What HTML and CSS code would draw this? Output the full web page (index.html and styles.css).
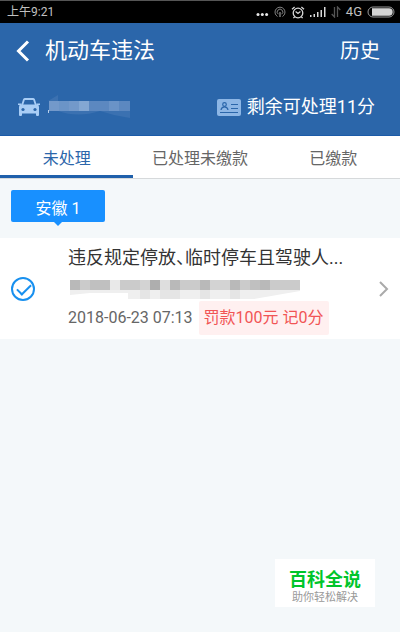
FILE: index.html
```html
<!DOCTYPE html>
<html lang="zh-CN">
<head>
<meta charset="utf-8">
<meta name="viewport" content="width=device-width, initial-scale=1">
<title>机动车违法</title>
<link rel="stylesheet" href="styles.css">
</head>
<body>
<div class="status">
  <span>上午9:21</span>
  <div class="status-icons">
    <svg width="14" height="12" viewBox="0 0 14 12" fill="#e8e8e8"><circle cx="3" cy="8.5" r="1.5"/><circle cx="7.3" cy="8.5" r="1.5"/><circle cx="11.6" cy="8.5" r="1.5"/></svg>
    <svg width="12" height="12" viewBox="0 0 12 12" fill="none" stroke="#808080"><path d="M3.5 10.5A5 5 0 1 1 8.5 10.5"/><path d="M4.3 8.2A2.8 2.8 0 1 1 7.7 8.2"/><path d="M6 6v5" stroke-width="1.4"/></svg>
    <svg width="14" height="13" viewBox="0 0 14 13" fill="none" stroke="#d8d8d8" stroke-width="1.3"><circle cx="7" cy="7" r="4.8"/><path d="M1 3.2L3.6 1M13 3.2L10.4 1M4.6 5.6L7 7.4L9.4 5.6M3.6 10.8l-1.2 1.4M10.4 10.8l1.2 1.4"/></svg>
    <svg width="16" height="12" viewBox="0 0 16 12" fill="#d8d8d8"><path d="M0 9h1.500v2H0zM3.500 8H5v3H3.500zM7 6h1.500v5H7zM10.500 4H12v7h-1.500zM14 1h1.500v10H14z"/></svg>
    <svg width="10" height="12" viewBox="0 0 10 12" fill="none" stroke="#555" stroke-width="1.3"><path d="M3.5 1v10L.7 8M6.5 11V1l2.8 3"/></svg>
    <span class="network">4G</span>
    <svg width="28" height="12" viewBox="0 0 28 12"><rect x="1" y="1" width="26" height="10" rx="5" fill="none" stroke="#999"/><path d="M5 2.300h17a3.700 3.700 0 0 1 0 7.400H5z" fill="#d4d4d4"/></svg>
  </div>
</div>
<header class="header">
  <div class="titlebar">
    <button class="back" aria-label="返回"><svg width="14" height="22" viewBox="0 0 14 22" fill="none" stroke="#fff" stroke-width="3"><path d="M12 1.5L2.5 11L12 20.5"/></svg></button>
    <h1>机动车违法</h1>
    <a class="history" href="#">历史</a>
  </div>
  <div class="summary">
    <svg class="car" width="22" height="18" viewBox="0 0 22 18"><path d="M4.200 7L6 1.500Q6.300 1 7 1h8q.7 0 1 .5L17.800 7" fill="none" stroke="#a9cdf5" stroke-width="1.800"/><path d="M0 5.500h3.500v1h15v-1H22V7h-1.500l.5 2v8q0 1-1 1h-1q-1 0-1-1v-1.500H4V17q0 1-1 1H2q-1 0-1-1V9l.5-2H0z" fill="#a9cdf5"/><g fill="#2b66aa"><circle cx="5" cy="11.500" r="1.600"/><circle cx="17" cy="11.500" r="1.600"/></g></svg>
    <svg class="plate" width="92" height="26" viewBox="0 0 92 26"><path d="M0 7L10 1V17Q30 24 52 17L66 21L82 24V7z" fill="#3b71b1"/><path d="M1 7h30v10H1z" fill="#7399ca"/><path d="M11 7h10v10H11z" fill="#6b94c7"/><path d="M31 7h10v10H31z" fill="#83a7d3"/><path d="M41 7h41v10H41z" fill="#5c88c0"/><path d="M61 7h10v10H61z" fill="#6a93c7"/><path d="M0 16h1v3H0z" fill="#b9d0ea"/></svg>
    <svg class="license" width="24" height="17" viewBox="0 0 24 17"><rect width="24" height="17" rx="2" fill="#8db6e5"/><g fill="none" stroke="#2b66aa" stroke-width="1.200"><circle cx="7.500" cy="5.500" r="1.800"/><path d="M4 11Q4.500 7.800 7.500 7.800T11 11M14 5.500h7M14 9.500h7M3 13.500h18"/></g></svg>
    <span>剩余可处理11分</span>
  </div>
</header>
<nav class="tabs">
  <a class="tab active" href="#">未处理</a>
  <a class="tab" href="#">已处理未缴款</a>
  <a class="tab" href="#">已缴款</a>
</nav>
<main>
  <button class="region">安徽 1</button>
  <article class="card">
    <label class="check"><input type="checkbox" checked aria-label="选择"></label>
    <div class="details">
      <h2>违反规定停放、临时停车且驾驶人...</h2>
      <svg class="masked" width="232" height="26" viewBox="0 0 232 26"><path d="M2 16h230v1l-46 8H60v-6H22L2 21z" fill="#efefef"/><path d="M72 16h10v9H72zM92 16h10v9H92zM102 16h10v9h-10zM132 16h10v9h-10zM162 16h10v9h-10z" fill="#e5e5e5"/><path d="M2 6h230v10H2z" fill="#cbcbcb"/><path d="M2 6h10v10H2zM102 6h10v10h-10zM132 6h10v10h-10zM162 6h10v10h-10zM192 6h10v10h-10z" fill="#b9b9b9"/><path d="M82 6h10v10H82z" fill="#aeaeae"/><path d="M22 6h20v10H22zM182 6h10v10h-10z" fill="#c0c0c0"/><path d="M42 6h10v10H42z" fill="#e9e9e9"/><path d="M92 6h10v10H92z" fill="#dedede"/><path d="M72 6h10v10H72zM142 6h20v10h-20z" fill="#d3d3d3"/></svg>
      <div class="meta"><time>2018-06-23 07:13</time><span class="penalty">罚款100元 记0分</span></div>
    </div>
    <svg class="chevron" width="10" height="16" viewBox="0 0 10 16" fill="none" stroke="#aaa" stroke-width="2"><path d="M1 1l7 7l-7 7"/></svg>
  </article>
</main>
<aside class="brand"><strong>百科全说</strong><span>助你轻松解决</span></aside>
</body>
</html>
```
FILE: styles.css
```css
* { box-sizing: border-box; }
body {
  margin: 0;
  min-height: 100vh;
  background: #f4f8fa;
  color: #333;
  font-family: Roboto, "Noto Sans CJK SC", sans-serif;
  font-size: 16px;
  line-height: 24px;
}
h1, h2 { margin: 0; font-weight: 400; }
a { color: inherit; text-decoration: none; }
button { border: 0; padding: 0; font: inherit; color: inherit; }
svg { display: block; flex: none; }
.status {
  display: flex;
  align-items: center;
  justify-content: space-between;
  height: 23px;
  padding: 0 5px 0 7px;
  border-top: 1px solid #555;
  background: #000;
  color: #c0c0c0;
  font-size: 12px;
}
.status-icons { display: flex; align-items: center; gap: 5px; }
.network { font-size: 13px; }
.header { background: #2b66aa; color: #fff; border-bottom: 1px solid #1c5ba8; }
.titlebar { display: flex; align-items: center; height: 56px; padding: 0 20px 0 16px; }
.back { width: 29px; background: none; }
.titlebar h1 { flex: 1; font-size: 22px; }
.history { font-size: 20px; }
.summary { display: flex; align-items: center; height: 56px; padding: 0 25px 0 18px; font-size: 18px; }
.plate { margin: 0 auto 0 8px; }
.license { margin-right: 6px; }
.tabs { display: grid; grid-template-columns: repeat(3, 1fr); background: #fff; border-bottom: 1px solid #d6d9db; }
.tab { padding: 11px 0 7px; text-align: center; color: #666; }
.tab.active { color: #2b66aa; box-shadow: inset 0 -3px #1f60ab; }
.region {
  position: relative;
  display: block;
  width: 94px;
  height: 32px;
  margin: 11px 11px 16px;
  padding-top: 6px;
  border-radius: 2px;
  background: #1890ff;
  color: #fff;
}
.region::after {
  content: "";
  position: absolute;
  top: 100%;
  left: 50%;
  border: 4px solid transparent;
  border-top-color: #1890ff;
  transform: translateX(-50%);
}
.card { display: flex; align-items: center; padding: 8px 11px 4px; background: #fff; }
.check { width: 57px; }
.check input {
  display: block;
  appearance: none;
  width: 24px;
  height: 24px;
  margin: 0;
  border: 2px solid #1890ef;
  border-radius: 50%;
}
.check input::after {
  content: "";
  display: block;
  width: 12px;
  height: 6px;
  margin: 5px 4px;
  border: solid #1890ef;
  border-width: 0 0 2px 2px;
  transform: rotate(-45deg);
}
.check, .chevron { margin-bottom: 4px; }
.details { flex: 1; min-width: 0; }
.details h2 { font-size: 18px; white-space: nowrap; font-feature-settings: "halt"; }
.masked { margin: 4px 0 1px; }
.meta { display: flex; align-items: center; gap: 6px; color: #666; white-space: nowrap; }
.penalty { padding: 5px; border-radius: 2px; background: #fff0f0; color: #f15555; }
.brand {
  position: fixed;
  right: 25px;
  bottom: 25px;
  display: flex;
  flex-direction: column;
  align-items: center;
  width: 100px;
  padding: 10px 0 2px;
  background: #fff;
  color: #999;
  font-size: 11px;
  line-height: 14px;
}
.brand strong { color: #00c52b; font-size: 18px; line-height: 22px; }
```
